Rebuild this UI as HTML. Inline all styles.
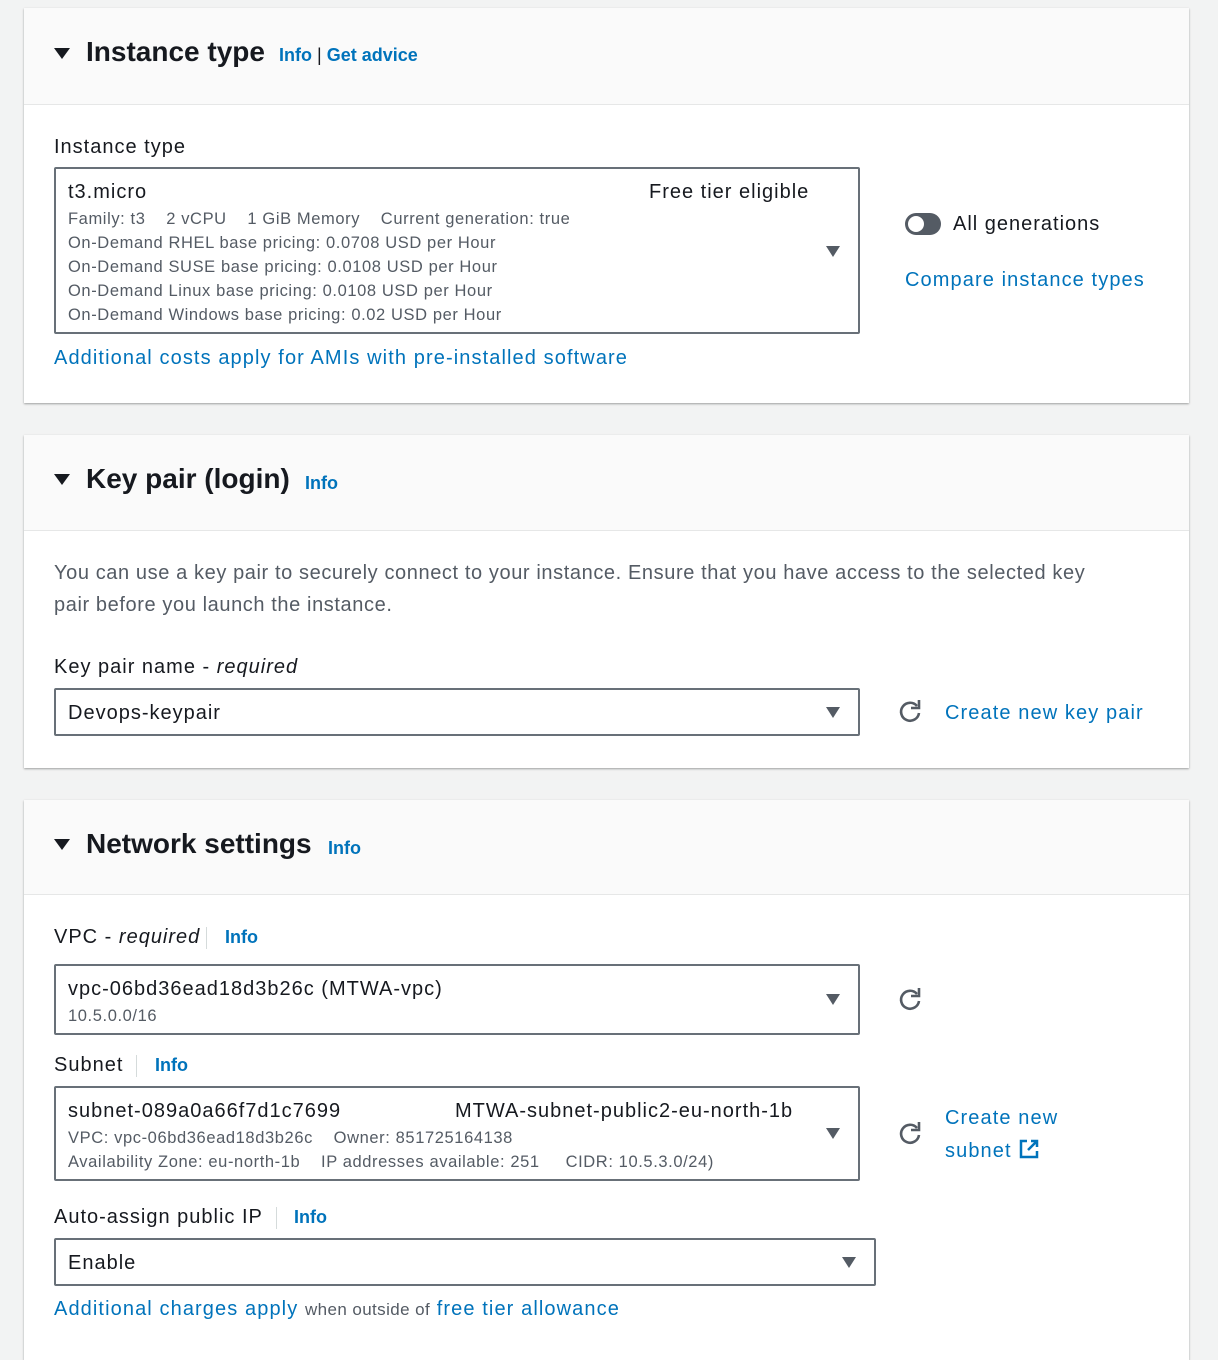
<!DOCTYPE html><html><head><style>
body{margin:0;width:1218px;height:1344px;background:#f2f3f3;font-family:"Liberation Sans",sans-serif;color:#16191f;position:relative;overflow:hidden}
.p{position:absolute;left:24px;width:1165px;background:#fff;box-shadow:0 1px 2px rgba(0,0,0,.35)}
.h{position:absolute;left:0;top:0;width:100%;background:#fafafa;border-bottom:1px solid #e6e7e7}
.a{position:absolute}
.t{font-size:28px;font-weight:bold}
.tri{position:absolute;width:0;height:0;border-left:8px solid transparent;border-right:8px solid transparent;border-top:11px solid #16191f}
.dd{border-left:7px solid transparent;border-right:7px solid transparent;border-top:11px solid #545b64}
.i{color:#0073bb;font-weight:bold;font-size:18px}
.l{color:#0073bb;font-size:20px;letter-spacing:1.1px}
.box{position:absolute;border:2px solid #687078;border-radius:2px;background:#fff}
.s{color:#545b64;font-size:16.5px;line-height:24px;letter-spacing:0.6px}
.f{font-size:20px;letter-spacing:1px}
.sep{position:absolute;width:1px;height:22px;background:#d5dbdb}
</style></head><body>
<div class="p" style="top:8px;height:395px">
<div class="h" style="height:96px"></div>
<div class="tri" style="left:30px;top:40px"></div>
<div class="a t" style="left:62px;top:28px">Instance type</div>
<div class="a i" style="left:255px;top:37px">Info <span style="color:#16191f;font-weight:normal">|</span> Get advice</div>
<div class="a f" style="left:30px;top:128px">Instance type</div>
<div class="box" style="left:30px;top:159px;width:802px;height:163px"></div>
<div class="a f" style="left:44px;top:173px">t3.micro</div>
<div class="a f" style="left:625px;top:173px">Free tier eligible</div>
<div class="a s" style="left:44px;top:199px">Family: t3 &nbsp;&nbsp; 2 vCPU &nbsp;&nbsp; 1 GiB Memory &nbsp;&nbsp; Current generation: true<br>On-Demand RHEL base pricing: 0.0708 USD per Hour<br>On-Demand SUSE base pricing: 0.0108 USD per Hour<br>On-Demand Linux base pricing: 0.0108 USD per Hour<br>On-Demand Windows base pricing: 0.02 USD per Hour</div>
<div class="tri dd" style="left:802px;top:238px"></div>
<div class="a l" style="left:30px;top:339px">Additional costs apply for AMIs with pre-installed software</div>
<div class="a" style="left:881px;top:205px;width:36px;height:22px;border-radius:11px;background:#545b64"><div style="position:absolute;left:3px;top:3px;width:16px;height:16px;border-radius:8px;background:#fff"></div></div>
<div class="a f" style="left:929px;top:205px">All generations</div>
<div class="a l" style="left:881px;top:261px">Compare instance types</div>
</div>
<div class="p" style="top:435px;height:333px">
<div class="h" style="height:95px"></div>
<div class="tri" style="left:30px;top:39px"></div>
<div class="a t" style="left:62px;top:28px">Key pair (login)</div>
<div class="a i" style="left:281px;top:38px">Info</div>
<div class="a f" style="left:30px;top:122px;color:#545b64;line-height:32px;width:1060px;letter-spacing:0.6px">You can use a key pair to securely connect to your instance. Ensure that you have access to the selected key pair before you launch the instance.</div>
<div class="a f" style="left:30px;top:221px">Key pair name - <i>required</i></div>
<div class="box" style="left:30px;top:253px;width:802px;height:44px"></div>
<div class="a f" style="left:44px;top:267px">Devops-keypair</div>
<div class="tri dd" style="left:802px;top:272px"></div>
<svg class="a" style="left:873px;top:264px" width="26" height="26" viewBox="0 0 26 26"><path d="M20 7A9 9 0 1 0 22 14" fill="none" stroke="#545b64" stroke-width="2.6"/><path d="M14 9h8V1" fill="none" stroke="#545b64" stroke-width="2.6"/></svg>
<div class="a l" style="left:921px;top:267px">Create new key pair</div>
</div>
<div class="p" style="top:800px;height:560px">
<div class="h" style="height:94px"></div>
<div class="tri" style="left:30px;top:39px"></div>
<div class="a t" style="left:62px;top:28px">Network settings</div>
<div class="a i" style="left:304px;top:38px">Info</div>
<div class="a f" style="left:30px;top:126px">VPC - <i>required</i></div>
<div class="sep" style="left:182px;top:127px"></div>
<div class="a i" style="left:201px;top:127px">Info</div>
<div class="box" style="left:30px;top:164px;width:802px;height:67px"></div>
<div class="a f" style="left:44px;top:178px">vpc-06bd36ead18d3b26c (MTWA-vpc)</div>
<div class="a s" style="left:44px;top:204px">10.5.0.0/16</div>
<div class="tri dd" style="left:802px;top:194px"></div>
<svg class="a" style="left:873px;top:187px" width="26" height="26" viewBox="0 0 26 26"><path d="M20 7A9 9 0 1 0 22 14" fill="none" stroke="#545b64" stroke-width="2.6"/><path d="M14 9h8V1" fill="none" stroke="#545b64" stroke-width="2.6"/></svg>
<div class="a f" style="left:30px;top:254px">Subnet</div>
<div class="sep" style="left:112px;top:255px"></div>
<div class="a i" style="left:131px;top:255px">Info</div>
<div class="box" style="left:30px;top:286px;width:802px;height:91px"></div>
<div class="a f" style="left:44px;top:300px">subnet-089a0a66f7d1c7699</div>
<div class="a f" style="left:431px;top:300px">MTWA-subnet-public2-eu-north-1b</div>
<div class="a s" style="left:44px;top:326px">VPC: vpc-06bd36ead18d3b26c &nbsp;&nbsp; Owner: 851725164138<br>Availability Zone: eu-north-1b &nbsp;&nbsp; IP addresses available: 251 &nbsp;&nbsp;&nbsp; CIDR: 10.5.3.0/24)</div>
<div class="tri dd" style="left:802px;top:328px"></div>
<svg class="a" style="left:873px;top:321px" width="26" height="26" viewBox="0 0 26 26"><path d="M20 7A9 9 0 1 0 22 14" fill="none" stroke="#545b64" stroke-width="2.6"/><path d="M14 9h8V1" fill="none" stroke="#545b64" stroke-width="2.6"/></svg>
<div class="a l" style="left:921px;top:302px;line-height:33px">Create new<br>subnet <svg width="22" height="22" viewBox="0 0 22 22" style="vertical-align:-3px"><path d="M9 3H3v16h16v-6M13 3h6v6M19 3l-9 9" fill="none" stroke="#0073bb" stroke-width="2.5"/></svg></div>
<div class="a f" style="left:30px;top:406px">Auto-assign public IP</div>
<div class="sep" style="left:252px;top:407px"></div>
<div class="a i" style="left:270px;top:407px">Info</div>
<div class="box" style="left:30px;top:438px;width:818px;height:44px"></div>
<div class="a f" style="left:44px;top:452px">Enable</div>
<div class="tri dd" style="left:818px;top:457px"></div>
<div class="a l" style="left:30px;top:498px">Additional charges apply <span style="color:#545b64;font-size:17px;letter-spacing:0.4px">when outside of</span> free tier allowance</div>
</div>
</body></html>
